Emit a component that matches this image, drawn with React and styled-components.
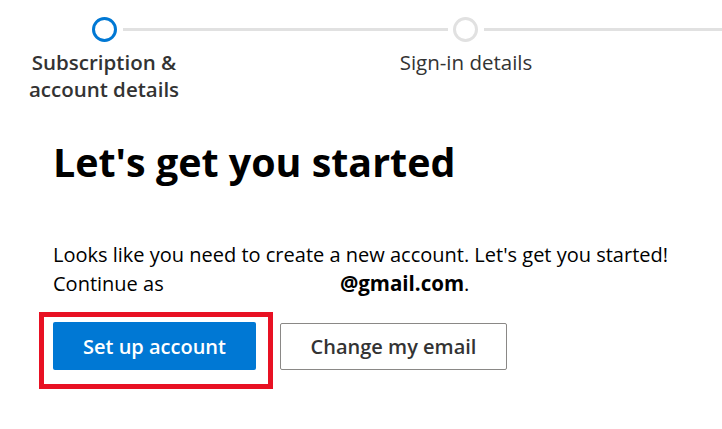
import React from 'react';
import styled, { createGlobalStyle } from 'styled-components';

const GlobalStyle = createGlobalStyle`
    body{
        margin: 0;
        background: #fff;
        font-family: "Open Sans", "Noto Sans", Arial, sans-serif;
        color: #000;
    }
`;

const Page = styled.div`
    width: 722px;
    height: 429px;
    overflow: hidden;
    background: #fff;
`;

const Track = styled.div`
    display: flex;
    align-items: center;
    padding: 17px 0 0 92px;
`;

const Circle = styled.div`
    width: 25px;
    height: 25px;
    box-sizing: border-box;
    border-radius: 50%;
    border: 3px solid ${props => props.$active ? '#0078d4' : '#e1e1e1'};
    flex-shrink: 0;
`;

const Line = styled.div`
    height: 3px;
    background: #e1e1e1;
    margin: 0 5px 0 6px;
    width: ${props => props.$fill ? 'auto' : '325px'};
    flex: ${props => props.$fill ? 1 : 'none'};
    ${props => props.$fill && 'margin-right: 0;'}
`;

const Labels = styled.div`
    display: flex;
    gap: 202px;
    padding: 7px 0 0 24px;
`;

const Label = styled.div`
    width: 160px;
    text-align: center;
    font-size: 20.5px;
    line-height: 27px;
    color: #333;
    font-weight: ${props => props.$active ? 600 : 400};
`;

const Content = styled.div`
    padding: 35px 0 0 53px;
`;

const Title = styled.h1`
    margin: 0;
    font-size: 39.4px;
    line-height: 48px;
    font-weight: 700;
    color: #000;
`;

const Text = styled.p`
    margin: 55px 0 0;
    font-size: 20px;
    line-height: 28px;
    color: #000;
`;

const Hidden = styled.span`
    display: inline-block;
    width: 171px;
`;

const Email = styled.b`
    font-weight: 700;
    font-size: 20.5px;
`;

const Actions = styled.div`
    display: flex;
    align-items: flex-start;
    gap: 7px;
    margin: 14px 0 0 -14px;
`;

const Highlight = styled.div`
    border: 5px solid #e81123;
    padding: 5px 12px 14px 9px;
`;

const Button = styled.button`
    box-sizing: border-box;
    height: 48px;
    padding: 0;
    border-radius: 2px;
    font-family: "Open Sans", "Noto Sans", Arial, sans-serif;
    font-size: 20px;
    font-weight: 600;
    cursor: pointer;
    width: ${props => props.$w}px;
    background: ${props => props.$primary ? '#0078d4' : '#fff'};
    color: ${props => props.$primary ? '#fff' : '#333'};
    border: ${props => props.$primary ? 'none' : '1px solid #8a8886'};
`;

const SecondButton = styled(Button)`
    margin-top: 11px;
    height: 47px;
`;

const App = () => {
    return (
        <Page>
            <GlobalStyle />
            <Track>
                <Circle $active />
                <Line />
                <Circle />
                <Line $fill />
            </Track>
            <Labels>
                <Label $active>Subscription &amp; account details</Label>
                <Label>Sign-in details</Label>
            </Labels>
            <Content>
                <Title>Let's get you started</Title>
                <Text>
                    Looks like you need to create a new account. Let's get you started!<br />
                    Continue as <Hidden /><Email>@gmail.com</Email>.
                </Text>
                <Actions>
                    <Highlight>
                        <Button $primary $w={203}>Set up account</Button>
                    </Highlight>
                    <SecondButton $w={227}>Change my email</SecondButton>
                </Actions>
            </Content>
        </Page>
    );
};

export default App;
